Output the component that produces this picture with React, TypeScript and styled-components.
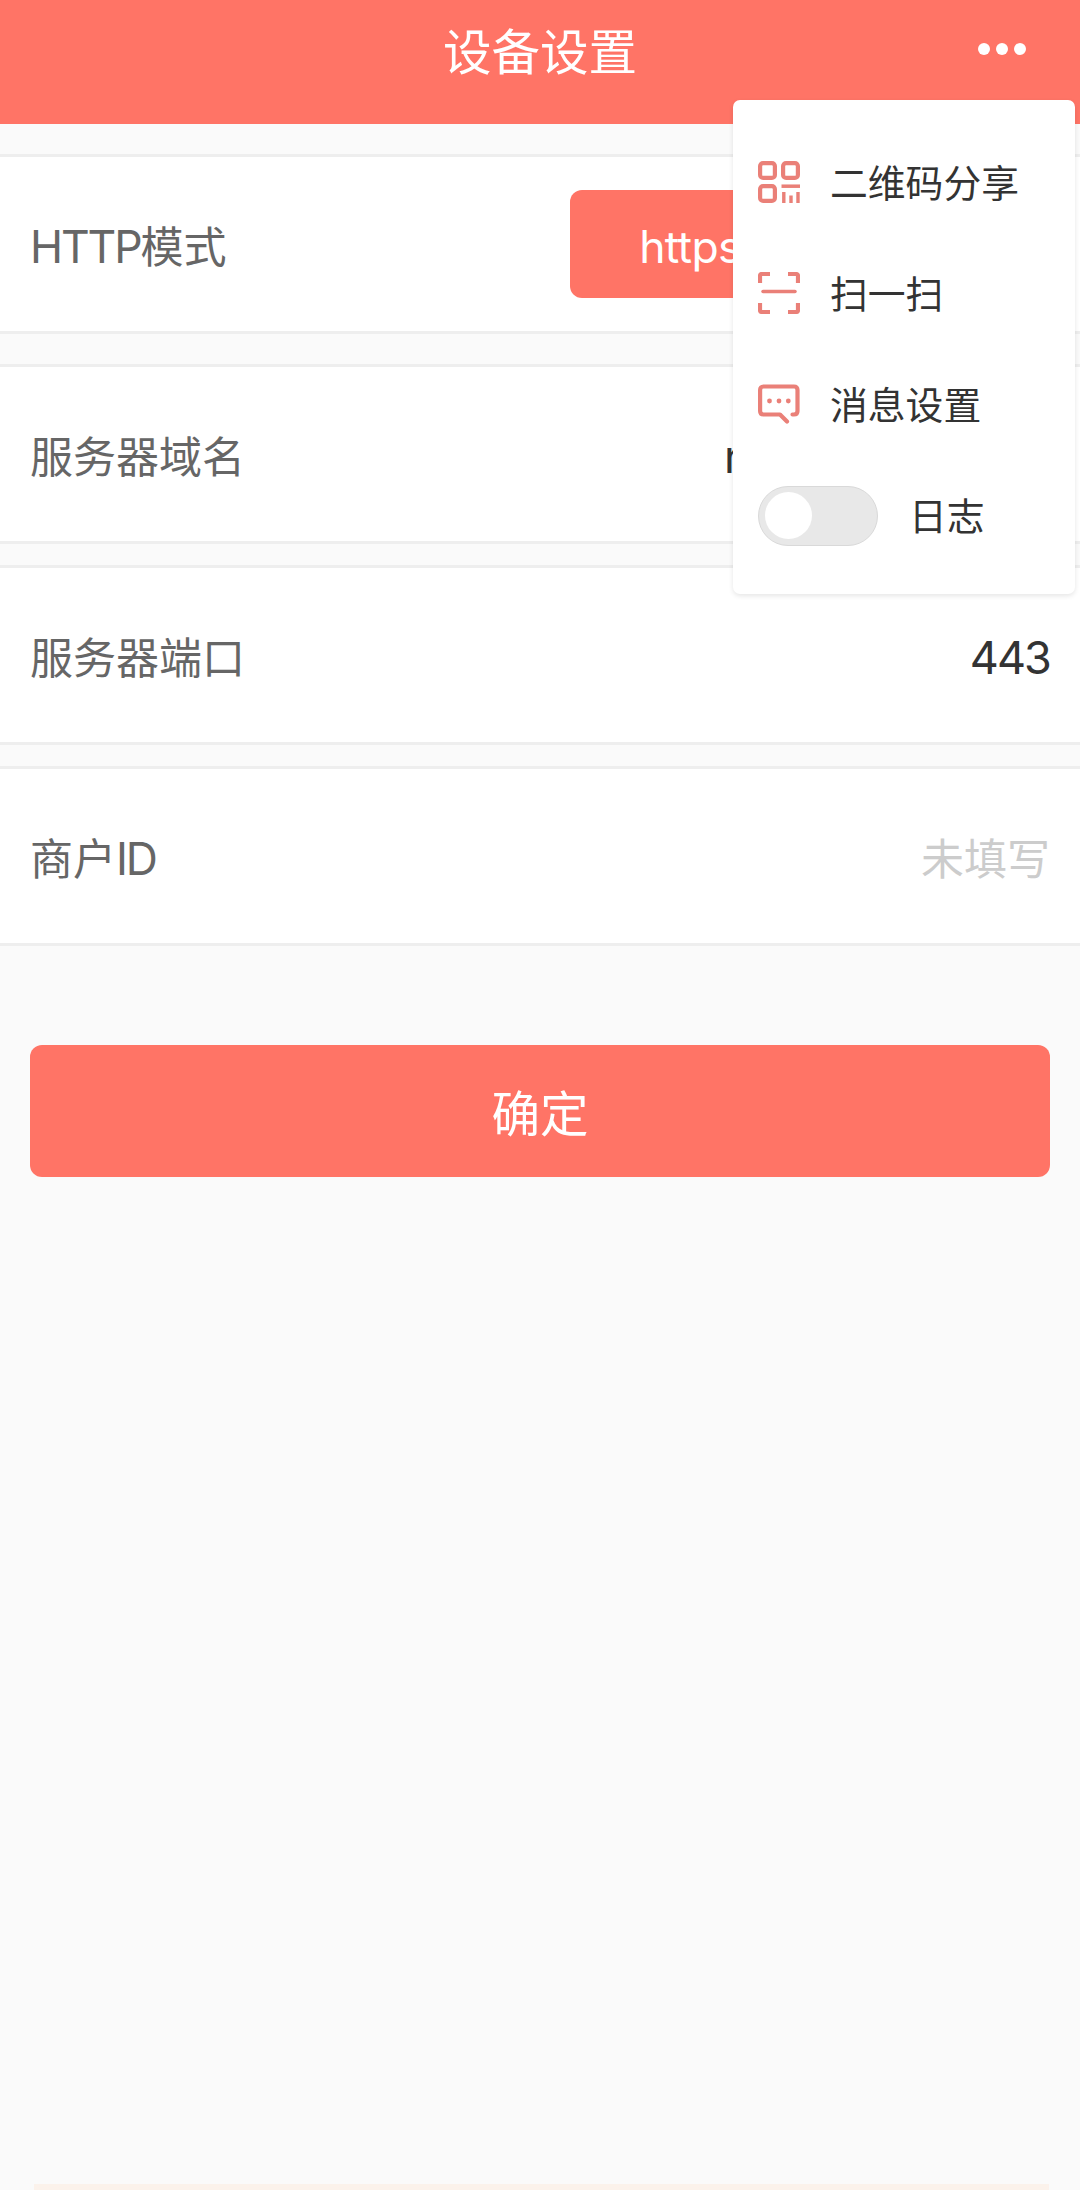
import React, { useState } from "react";
import styled, { createGlobalStyle } from "styled-components";

const coral = "#ff7466";
const iconCoral = "#ea8078";

const GlobalStyle = createGlobalStyle`
  *, *::before, *::after { box-sizing: border-box; }
  body {
    margin: 0;
    background: #fafafa;
    font-family: "Noto Sans CJK SC", "Noto Sans", sans-serif;
  }
  button { font: inherit; border: 0; padding: 0; }
`;

const Screen = styled.div`
  position: relative;
  display: flex;
  flex-direction: column;
  width: 1080px;
  height: 2190px;
  overflow: hidden;
  background: #fafafa;
`;

const Header = styled.header`
  display: grid;
  grid-template-columns: 1fr auto 1fr;
  align-items: center;
  height: 124px;
  padding: 0 54px 26px;
  background: ${coral};
  color: #fff;
`;

const Title = styled.h1`
  grid-column: 2;
  margin: 0;
  font-size: 48.5px;
  font-weight: 400;
  line-height: 98px;
`;

const MoreButton = styled.button`
  display: flex;
  justify-self: end;
  gap: 6px;
  background: none;
`;

const Dot = styled.span`
  width: 12px;
  height: 12px;
  border-radius: 50%;
  background: #fff;
`;

const Form = styled.main`
  display: flex;
  flex-direction: column;
  gap: 21px;
  padding-top: 30px;
`;

const Row = styled.div<{ $spaced?: boolean }>`
  display: flex;
  align-items: center;
  justify-content: space-between;
  height: 180px;
  margin-bottom: ${(p) => (p.$spaced ? "9px" : "0")};
  padding: 0 30px;
  background: #fff;
  border-top: 3px solid #eee;
  border-bottom: 3px solid #eee;
`;

const Label = styled.label`
  padding-bottom: 1px;
  font-size: 43px;
  line-height: 64px;
  color: #666;
`;

const Latin = styled.span`
  font-family: Inter, sans-serif;
  font-size: 44.5px;
  letter-spacing: -2.1px;
  line-height: 0;
`;

const Value = styled.span<{ $width?: number }>`
  width: ${(p) => (p.$width ? `${p.$width}px` : "auto")};
  padding-top: 5px;
  font-family: Inter, sans-serif;
  font-size: 45px;
  letter-spacing: -1.9px;
  line-height: 64px;
  color: #333;
`;

const Placeholder = styled.span`
  padding-bottom: 1px;
  font-size: 43px;
  line-height: 64px;
  color: #ccc;
`;

const Segments = styled.div`
  display: grid;
  grid-template-columns: 240px 240px;
  height: 108px;
`;

const Segment = styled.button`
  border-radius: 12px 0 0 12px;
  background: ${coral};
  color: #fff;
  font-family: Inter, sans-serif;
  font-size: 44.5px;
  letter-spacing: -0.7px;
  padding-top: 6px;
`;

const Confirm = styled.button`
  height: 132px;
  margin: 99px 30px 0;
  padding: 0 0 1px;
  border-radius: 12px;
  background: ${coral};
  color: #fff;
  font-size: 48.5px;
`;

const BottomBar = styled.div`
  height: 6px;
  margin: auto 31px 0 34px;
  background: #fbf2eb;
`;

const Menu = styled.nav`
  position: absolute;
  top: 100px;
  right: 5px;
  width: 342px;
  height: 494px;
  padding: 26px 25px 24px;
  border-radius: 7px;
  background: #fff;
  box-shadow: 0 2px 5px rgba(0, 0, 0, 0.1);
`;

const MenuItem = styled.div<{ $gap?: number }>`
  display: flex;
  align-items: center;
  gap: ${(p) => p.$gap ?? 30}px;
  height: 111px;
  color: #333;
  font-size: 37.8px;
  line-height: 56px;
`;

const MenuIcon = styled.svg`
  flex: none;
  width: 42px;
  height: 42px;
  fill: none;
  stroke: ${iconCoral};
  stroke-width: 4.2;
  stroke-linecap: round;
  stroke-linejoin: round;
`;

const MenuText = styled.span`
  padding-bottom: 1px;
`;

const Toggle = styled.button<{ $on: boolean }>`
  display: flex;
  align-items: center;
  justify-content: ${(p) => (p.$on ? "flex-end" : "flex-start")};
  flex: none;
  width: 120px;
  height: 60px;
  margin-top: 2px;
  padding: 0 6px;
  border: 1px solid #d9d9d9;
  border-radius: 30px;
  background: ${(p) => (p.$on ? coral : "#e8e8e8")};
`;

const Knob = styled.span`
  width: 47px;
  height: 47px;
  border-radius: 50%;
  background: #fff;
`;

const QrIcon = () => (
  <MenuIcon viewBox="0 0 42 42">
    <rect x="2.1" y="2.1" width="14.8" height="14.8" rx="3" />
    <rect x="25.1" y="2.1" width="14.8" height="14.8" rx="3" />
    <rect x="2.1" y="25.1" width="14.8" height="14.8" rx="3" />
    <g strokeLinecap="butt">
      <path d="M23.5 25.2H42" strokeWidth="3.5" />
      <path d="M25.8 31V42M33 34.5V42M40 31V42" strokeWidth="3.4" />
    </g>
  </MenuIcon>
);

const ScanIcon = () => (
  <MenuIcon viewBox="0 0 42 42">
    <path
      d="M2 11V4Q2 2 4 2H12M30 2H38Q40 2 40 4V11M2 31V38Q2 40 4 40H12M30 40H38Q40 40 40 38V31"
      strokeLinecap="butt"
    />
    <path d="M5 19.5H37" strokeWidth="3.5" />
  </MenuIcon>
);

const MessageIcon = () => (
  <MenuIcon viewBox="0 0 42 42">
    <path d="M34.5 31.5H36Q39.5 31.5 39.5 28V7Q39.5 3.5 36 3.5H5.5Q2.1 3.5 2.1 7V28Q2.1 31.5 5.5 31.5H22L29 38.5" />
    <g fill={iconCoral} stroke="none">
      <circle cx="11.5" cy="18" r="2.4" />
      <circle cx="21" cy="18" r="2.4" />
      <circle cx="30.3" cy="18" r="2.4" />
    </g>
  </MenuIcon>
);

export default function App() {
  const [logging, setLogging] = useState(false);
  return (
    <>
      <GlobalStyle />
      <Screen>
        <Header>
          <Title>设备设置</Title>
          <MoreButton>
            <Dot />
            <Dot />
            <Dot />
          </MoreButton>
        </Header>
        <Form>
          <Row $spaced>
            <Label>
              <Latin>HTTP</Latin>模式
            </Label>
            <Segments>
              <Segment>https</Segment>
            </Segments>
          </Row>
          <Row>
            <Label>服务器域名</Label>
            <Value $width={326}>n</Value>
          </Row>
          <Row>
            <Label>服务器端口</Label>
            <Value>443</Value>
          </Row>
          <Row>
            <Label>
              商户<Latin>ID</Latin>
            </Label>
            <Placeholder>未填写</Placeholder>
          </Row>
        </Form>
        <Confirm>确定</Confirm>
        <BottomBar />
        <Menu>
          <MenuItem>
            <QrIcon />
            <MenuText>二维码分享</MenuText>
          </MenuItem>
          <MenuItem>
            <ScanIcon />
            <MenuText>扫一扫</MenuText>
          </MenuItem>
          <MenuItem>
            <MessageIcon />
            <MenuText>消息设置</MenuText>
          </MenuItem>
          <MenuItem $gap={31}>
            <Toggle $on={logging} onClick={() => setLogging(!logging)}>
              <Knob />
            </Toggle>
            <MenuText>日志</MenuText>
          </MenuItem>
        </Menu>
      </Screen>
    </>
  );
}
